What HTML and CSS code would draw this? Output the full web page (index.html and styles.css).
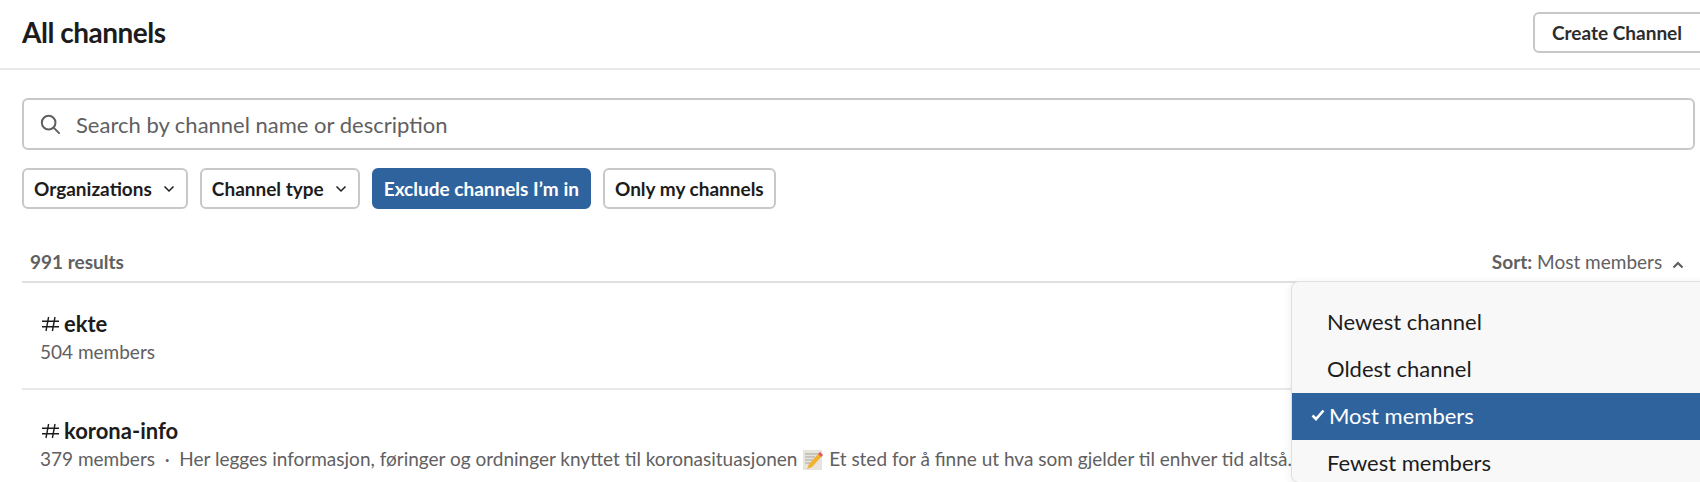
FILE: index.html
```html
<!DOCTYPE html>
<html lang="en">
<head>
    <meta charset="UTF-8">
    <title>All channels</title>
    <link rel="stylesheet" href="styles.css">
</head>
<body>
    <div class="header">
        <h1>All channels</h1>
        <button class="btn btn-create">Create Channel</button>
    </div>

    <div class="content">
        <div class="search">
            <svg class="search-icon" width="20" height="20" viewBox="0 0 22 22" fill="none" stroke="#616061" stroke-width="2.2" stroke-linecap="round">
                <circle cx="9.5" cy="9.5" r="7.5"/>
                <path d="M15 15l6 6"/>
            </svg>
            <span>Search by channel name or description</span>
        </div>

        <div class="filters">
            <button class="btn filter has-menu">Organizations
                <svg width="12" height="8" viewBox="0 0 12 8" fill="none" stroke="#1d1c1d" stroke-width="1.5"><path d="M1.5 1.5 6 6l4.5-4.5"/></svg>
            </button>
            <button class="btn filter has-menu">Channel type
                <svg width="12" height="8" viewBox="0 0 12 8" fill="none" stroke="#1d1c1d" stroke-width="1.5"><path d="M1.5 1.5 6 6l4.5-4.5"/></svg>
            </button>
            <button class="btn filter active">Exclude channels I’m in</button>
            <button class="btn filter">Only my channels</button>
        </div>

        <div class="results-bar">
            <span class="results-count">991 results</span>
            <span class="sort"><b>Sort:</b> Most members
                <svg width="12" height="8" viewBox="0 0 12 8" fill="none" stroke="#616061" stroke-width="2.2"><path d="M1.5 6.5 6 2l4.5 4.5"/></svg>
            </span>
        </div>

        <div class="channel">
            <div class="channel-name">
                <svg class="hash" width="19" height="16" viewBox="0 0 19 16" fill="none" stroke="#1d1c1d" stroke-width="1.4"><path d="M1 5.2h17M1 10.8h17M7.6 1 5 15M14 1l-2.6 14"/></svg>
                ekte
            </div>
            <div class="channel-info">504 members</div>
        </div>
        <div class="channel">
            <div class="channel-name">
                <svg class="hash" width="19" height="16" viewBox="0 0 19 16" fill="none" stroke="#1d1c1d" stroke-width="1.4"><path d="M1 5.2h17M1 10.8h17M7.6 1 5 15M14 1l-2.6 14"/></svg>
                korona-info
            </div>
            <div class="channel-info">379 members &nbsp;·&nbsp; Her legges informasjon, føringer og ordninger knyttet til koronasituasjonen
                <svg class="memo" width="22" height="22" viewBox="0 0 22 22">
                    <rect x="1" y="1" width="19" height="20" fill="#e6e4dc"/>
                    <path d="M3 5h13M3 8h10M3 11h8M3 14h5" stroke="#a9a79f" stroke-width="1"/>
                    <path d="M18 3l3 3-11 12-5 2 2-5z" fill="#f2b230"/>
                    <path d="M18 3l3 3-2 2-3-3z" fill="#e0566b"/>
                </svg>
                Et sted for å finne ut hva som gjelder til enhver tid altså.</div>
        </div>
    </div>

    <div class="sort-menu">
        <div class="sort-item">Newest channel</div>
        <div class="sort-item">Oldest channel</div>
        <div class="sort-item selected">
            <svg class="check" width="14" height="12" viewBox="0 0 14 12" fill="none" stroke="#fff" stroke-width="2.6"><path d="M1.5 6.5 5 10l7.5-8.5"/></svg>
            Most members
        </div>
        <div class="sort-item">Fewest members</div>
    </div>
</body>
</html>
```

FILE: styles.css
```css
html, body {
    height: 482px;
    overflow: hidden;
}

body {
    font-family: Lato, "Open Sans", sans-serif;
    margin: 0;
    padding: 0;
    background-color: white;
    color: #1d1c1d;
    position: relative;
}

.header {
    height: 70px;
    box-sizing: border-box;
    padding: 0 0 4px 22px;
    display: flex;
    justify-content: space-between;
    align-items: center;
    border-bottom: 2px solid #e8e8e8;
    overflow: hidden;
}

.header h1 {
    margin: 0;
    font-size: 28px;
    font-weight: 700;
    letter-spacing: -0.5px;
}

.btn {
    font-family: inherit;
    font-weight: 700;
    font-size: 19px;
    color: #1d1c1d;
    background-color: white;
    border: 2px solid #c8c8c8;
    border-radius: 6px;
    cursor: pointer;
}

.btn-create {
    flex: none;
    width: 190px;
    height: 41px;
    margin-right: -23px;
    padding: 0 0 0 17px;
    text-align: left;
    color: #2c2c2d;
}

.content {
    padding: 28px 5px 0 22px;
}

.search {
    height: 52px;
    box-sizing: border-box;
    border: 2px solid #c8c8c8;
    border-radius: 6px;
    display: flex;
    align-items: center;
    padding-left: 16px;
    font-size: 22px;
    color: #616061;
}

.search-icon {
    margin-right: 16px;
}

.filters {
    display: flex;
    gap: 12px;
    margin-top: 18px;
}

.filter {
    height: 41px;
    padding: 0 10px;
    display: flex;
    align-items: center;
    gap: 11px;
}

.filter.has-menu {
    padding-right: 11px;
}

.filter.active {
    background-color: #2f639e;
    border-color: #2f639e;
    color: white;
}

.results-bar {
    height: 74px;
    box-sizing: border-box;
    padding: 32px 11px 0 8px;
    display: flex;
    justify-content: space-between;
    align-items: center;
    border-bottom: 2px solid #e0e0e0;
    font-size: 19px;
    color: #616061;
}

.results-count {
    font-weight: 700;
}

.sort svg {
    margin-left: 5px;
}

.channel {
    height: 107px;
    box-sizing: border-box;
    padding: 27px 18px 0;
    border-bottom: 2px solid #e8e8e8;
}

.channel-name {
    display: flex;
    align-items: center;
    gap: 4px;
    font-size: 22px;
    font-weight: 700;
    line-height: 28px;
}

.hash {
    margin-left: 1px;
}

.channel-info {
    font-size: 19px;
    line-height: 28px;
    color: #616061;
    white-space: nowrap;
}

.memo {
    vertical-align: -5px;
}

.sort-menu {
    position: absolute;
    left: 1291px;
    top: 281px;
    width: 420px;
    height: 183px;
    padding-top: 17px;
    background-color: #f8f8f8;
    border: 1px solid #e0e0e0;
    border-radius: 8px;
    box-shadow: 0 2px 8px rgba(0, 0, 0, 0.08);
    overflow: hidden;
}

.sort-item {
    height: 47px;
    box-sizing: border-box;
    padding: 0 0 2px 35px;
    display: flex;
    align-items: center;
    font-size: 22px;
}

.sort-item.selected {
    position: relative;
    background-color: #2f639e;
    color: white;
    padding-left: 37px;
}

.check {
    position: absolute;
    left: 19px;
    top: 16px;
}
```
